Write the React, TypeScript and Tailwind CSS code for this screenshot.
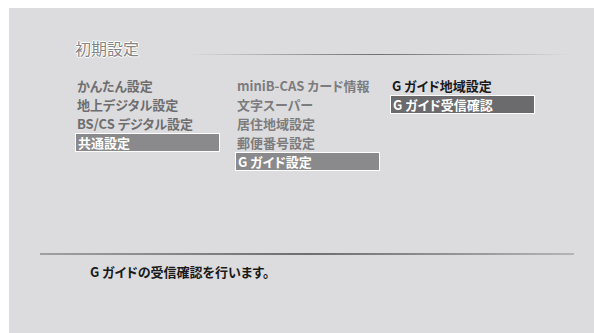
import React from "react";

const font = {
  fontFamily: '"Noto Sans CJK JP", "Noto Sans", sans-serif',
  fontFeatureSettings: '"palt"',
};

function Item({ text, kind }: { text: string; kind: "dim" | "dim2" | "dark" | "sel" | "sel2" }) {
  if (kind === "sel" || kind === "sel2") {
    return (
      <div
        className={`h-[19px] w-[145px] -ml-[2px] border border-white pl-[2px] flex items-center text-white whitespace-nowrap ${
          kind === "sel" ? "bg-[#8a8a8c]" : "bg-[#6b6b6d]"
        }`}
      >
        <span className="leading-none">{text}</span>
      </div>
    );
  }
  const color = kind === "dim" ? "text-[#6e6e70]" : kind === "dim2" ? "text-[#7c7c7e]" : "text-[#1a1a1a]";
  return (
    <div className={`h-[19px] flex items-center whitespace-nowrap ${color}`}>
      <span className="leading-none">{text}</span>
    </div>
  );
}

export default function App() {
  return (
    <div className="w-[594px] h-[333px] bg-white pl-[9px] pt-[8px] overflow-hidden" style={font}>
      <div className="w-full h-full bg-[#dcdcde] flex flex-col">
        {/* title */}
        <div className="h-[68px] flex items-end pb-[20px]">
          <div className="pl-[66px] flex items-end w-full">
            <span
              className="shrink-0 whitespace-nowrap text-[16px] leading-none text-[#858587]"
              style={{ textShadow: "1px 0 0 #fff, -1px 0 0 #fff, 0 1px 0 #fff, 0 -1px 0 #fff" }}
            >
              初期設定
            </span>
            <div className="shrink-0 ml-[50px] mb-[1px] h-[1px] w-[380px] bg-gradient-to-r from-[#dcdcde] via-[#707072] to-[#dcdcde]" />
          </div>
        </div>
        {/* menu */}
        <div className="flex pl-[68px] text-[13px] font-bold">
          <div className="w-[160px] flex flex-col">
            <Item text="かんたん設定" kind="dim" />
            <Item text="地上デジタル設定" kind="dim" />
            <Item text="BS/CS デジタル設定" kind="dim" />
            <Item text="共通設定" kind="sel" />
          </div>
          <div className="w-[155px] flex flex-col">
            <Item text="miniB-CAS カード情報" kind="dim2" />
            <Item text="文字スーパー" kind="dim2" />
            <Item text="居住地域設定" kind="dim2" />
            <Item text="郵便番号設定" kind="dim2" />
            <Item text="G ガイド設定" kind="sel" />
          </div>
          <div className="w-[150px] flex flex-col">
            <Item text="G ガイド地域設定" kind="dark" />
            <Item text="G ガイド受信確認" kind="sel2" />
          </div>
        </div>
        <div className="flex-1" />
        {/* footer */}
        <div className="h-[2px] ml-[31px] mr-[20px] bg-gradient-to-r from-[#a0a0a2] via-[#6e6e70] to-[#b4b4b6]" />
        <div className="pl-[81px] pt-[10px] h-[78px] text-[13px] font-bold text-[#1a1a1a] leading-none">
          G ガイドの受信確認を行います。
        </div>
      </div>
    </div>
  );
}
